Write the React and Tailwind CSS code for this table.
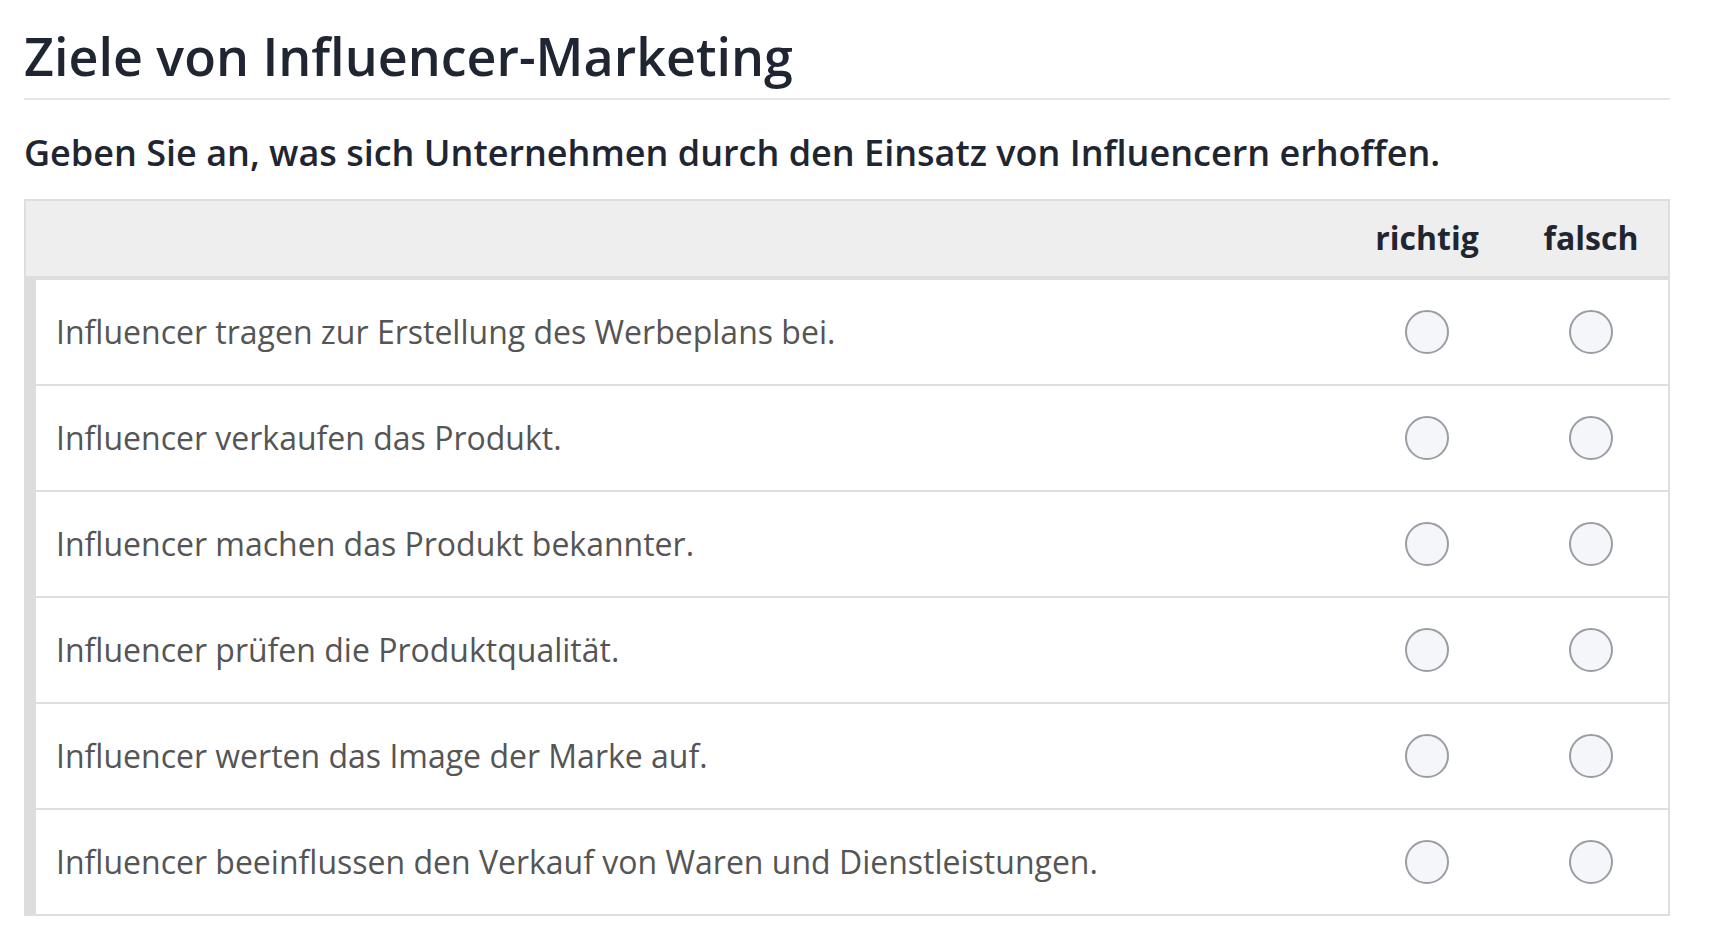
import React from "react";

const statements = [
  "Influencer tragen zur Erstellung des Werbeplans bei.",
  "Influencer verkaufen das Produkt.",
  "Influencer machen das Produkt bekannter.",
  "Influencer prüfen die Produktqualität.",
  "Influencer werten das Image der Marke auf.",
  "Influencer beeinflussen den Verkauf von Waren und Dienstleistungen.",
]

const Radio = () => (
  <span className="block w-[44px] h-[44px] rounded-full border-2 border-[#9a9da3] bg-[#f4f6fa]"/>
)

const Row = ({text, last}) => (
  <div className={`grid grid-cols-[1fr_174px_154px] items-center ${last ? "h-[104px]" : "h-[106px] border-b-2 border-[#dedede]"}`}>
    <div className="pl-[20px] text-[32px] text-[#555555]">{text}</div>
    <div className="flex justify-center"><Radio/></div>
    <div className="flex justify-center"><Radio/></div>
  </div>
)

const App = () => (
  <div className="min-h-screen bg-white px-[24px] pr-[43px] font-['Open_Sans',sans-serif]">
    <h1 className="pt-[25px] pb-[11px] text-[52px] leading-[1.2] font-semibold text-[#1f2631] border-b-2 border-[#e5e5e5]">
      Ziele von Influencer-Marketing
    </h1>

    <p className="mt-[31px] text-[36px] leading-[1.2] font-semibold text-[#1f2631]">
      Geben Sie an, was sich Unternehmen durch den Einsatz von Influencern erhoffen.
    </p>

    {/* answer table */}
    <div className="mt-[24px] border-2 border-[#dedede]">
      <div className="grid grid-cols-[1fr_174px_154px] items-center h-[79px] bg-[#eeeeee] border-b-4 border-[#dddddd]">
        <div/>
        <div className="text-center text-[32px] font-bold text-[#1f2631]">richtig</div>
        <div className="text-center text-[32px] font-bold text-[#1f2631]">falsch</div>
      </div>
      <div className="border-l-[10px] border-[#dddddd]">
        {statements.map((text, i) => (
          <Row key={text} text={text} last={i === statements.length - 1}/>
        ))}
      </div>
    </div>
  </div>
)

export default App
